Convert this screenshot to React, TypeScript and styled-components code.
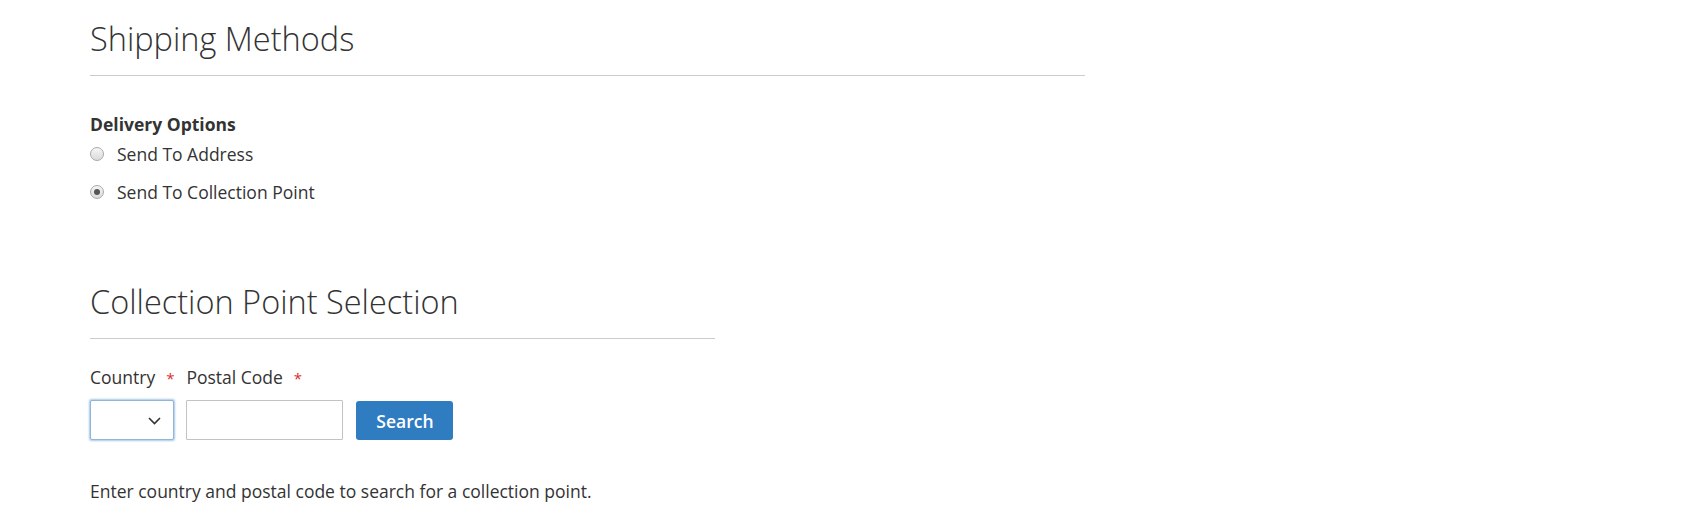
import React from "react";
import styled, { createGlobalStyle } from "styled-components";

const GlobalStyle = createGlobalStyle`
  html, body {
    margin: 0;
    padding: 0;
    background: #ffffff;
  }
  body {
    font-family: "Open Sans", "Liberation Sans", sans-serif;
    color: #333333;
    font-size: 17.5px;
  }
`;

const Page = styled.div`
  padding: 19px 0 0 90px;
  display: flex;
  flex-direction: column;
`;

const Section = styled.section<{ $width: number }>`
  width: ${(p) => p.$width}px;
  display: flex;
  flex-direction: column;
`;

const StepTitle = styled.h2`
  margin: 0;
  font-family: "Open Sans", "Liberation Sans", sans-serif;
  font-weight: 300;
  font-size: 32.5px;
  line-height: 40px;
  color: #333333;
  padding-bottom: 16px;
  border-bottom: 1px solid #cccccc;
`;

const Fieldset = styled.div`
  display: flex;
  flex-direction: column;
  padding-top: 36px;
`;

const Legend = styled.div`
  font-weight: 700;
  font-size: 17.5px;
  line-height: 24px;
`;

const RadioRow = styled.label<{ $top: number }>`
  display: flex;
  align-items: center;
  gap: 13px;
  margin-top: ${(p) => p.$top}px;
  font-size: 17.5px;
  line-height: 24px;
  cursor: pointer;
`;

const Radio = styled.input.attrs({ type: "radio" })`
  appearance: none;
  margin: 0;
  width: 14px;
  height: 14px;
  border-radius: 50%;
  border: 1px solid #a9a9a9;
  background: linear-gradient(#f6f6f6, #dadada);
  box-sizing: border-box;
  display: grid;
  place-items: center;
  flex: none;
  &:checked::after {
    content: "";
    width: 6px;
    height: 6px;
    border-radius: 50%;
    background: #555555;
  }
`;

const Spacer = styled.div<{ $h: number }>`
  height: ${(p) => p.$h}px;
  flex: none;
`;

const FieldRow = styled.div`
  display: flex;
  align-items: flex-start;
  gap: 12px;
  padding-top: 26px;
`;

const Field = styled.div`
  display: flex;
  flex-direction: column;
  gap: 10px;
`;

const Label = styled.div`
  font-size: 17.5px;
  line-height: 24px;
  white-space: nowrap;
`;

const Required = styled.span`
  color: #e02b27;
  margin-left: 11px;
  font-size: 15px;
`;

const SelectWrap = styled.div`
  position: relative;
  width: 84px;
  height: 40px;
`;

const Select = styled.select`
  appearance: none;
  width: 100%;
  height: 100%;
  box-sizing: border-box;
  border: 1px solid #8fb6d8;
  border-radius: 2px;
  background: #ffffff;
  box-shadow: 0 0 2px 1px #a7c8e6;
  outline: none;
  font-family: inherit;
  font-size: 17.5px;
`;

const Chevron = styled.svg`
  position: absolute;
  right: 13px;
  top: 17px;
  width: 13px;
  height: 8px;
  pointer-events: none;
`;

const TextInput = styled.input`
  width: 157px;
  height: 40px;
  box-sizing: border-box;
  border: 1px solid #c2c2c2;
  border-radius: 1px;
  background: #ffffff;
  font-family: inherit;
  font-size: 17.5px;
  padding: 0 9px;
  outline: none;
`;

const ButtonSlot = styled.div`
  padding-top: 36px;
  margin-left: 1px;
  display: flex;
`;

const Button = styled.button`
  width: 97px;
  height: 39px;
  border: none;
  border-radius: 3px;
  background: #307cc1;
  color: #ffffff;
  font-family: "Open Sans", "Liberation Sans", sans-serif;
  font-weight: 600;
  font-size: 17.5px;
  cursor: pointer;
  padding: 0;
`;

const Note = styled.p`
  margin: 39px 0 0 0;
  font-size: 17.5px;
  line-height: 24px;
`;

export default function App() {
  return (
    <>
      <GlobalStyle />
      <Page>
        <Section $width={995}>
          <StepTitle>Shipping Methods</StepTitle>
          <Fieldset>
            <Legend>Delivery Options</Legend>
            <RadioRow $top={6}>
              <Radio name="delivery" />
              Send To Address
            </RadioRow>
            <RadioRow $top={14}>
              <Radio name="delivery" defaultChecked />
              Send To Collection Point
            </RadioRow>
          </Fieldset>
        </Section>
        <Spacer $h={78} />
        <Section $width={625}>
          <StepTitle>Collection Point Selection</StepTitle>
          <FieldRow>
            <Field>
              <Label>
                Country<Required>*</Required>
              </Label>
              <SelectWrap>
                <Select defaultValue="">
                  <option value=""></option>
                </Select>
                <Chevron viewBox="0 0 13 8">
                  <path d="M1 1 L6.5 6.5 L12 1" fill="none" stroke="#333" strokeWidth="1.6" />
                </Chevron>
              </SelectWrap>
            </Field>
            <Field>
              <Label>
                Postal Code<Required>*</Required>
              </Label>
              <TextInput type="text" />
            </Field>
            <ButtonSlot>
              <Button type="button">Search</Button>
            </ButtonSlot>
          </FieldRow>
          <Note>Enter country and postal code to search for a collection point.</Note>
        </Section>
      </Page>
    </>
  );
}
